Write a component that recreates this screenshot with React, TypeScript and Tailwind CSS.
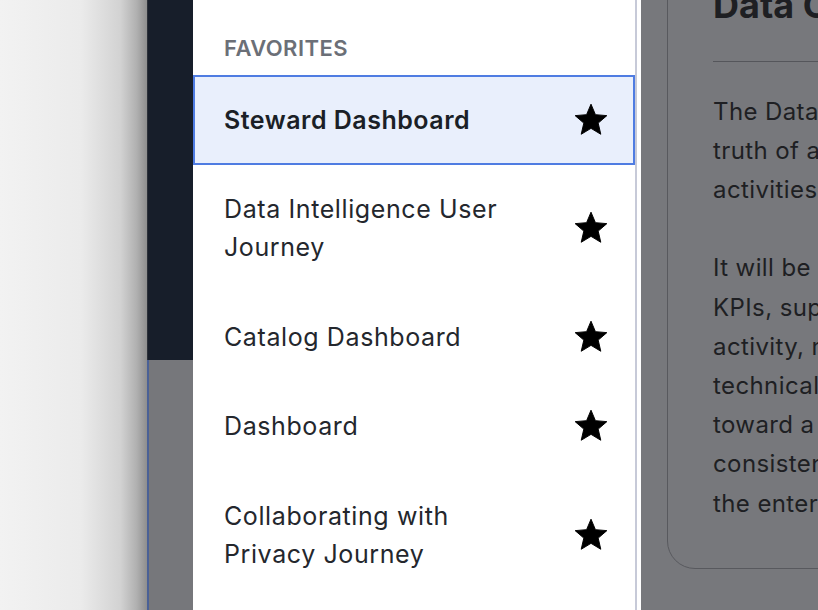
import React from "react";

const Star = () => (
  <svg width="38" height="38" viewBox="0 0 24 24" className="shrink-0">
    <path
      d="M12 17.27L18.18 21l-1.64-7.03L22 9.24l-7.19-.61L12 2 9.19 8.63 2 9.24l5.46 4.73L5.82 21z"
      fill="#000"
      stroke="#000"
      strokeWidth="0.6"
      strokeLinejoin="round"
    />
  </svg>
);

type Item = { label: string; selected?: boolean };

const items: Item[] = [
  { label: "Steward Dashboard", selected: true },
  { label: "Data Intelligence User Journey" },
  { label: "Catalog Dashboard" },
  { label: "Dashboard" },
  { label: "Collaborating with Privacy Journey" },
];

const lines1 = [
  "The Data Governance Dashboard is the single source of",
  "truth of all data governance and stewardship",
  "activities across the organization.",
];
const lines2 = [
  "It will be used to track governance health,",
  "KPIs, support stewardship workflows and",
  "activity, monitor quality, and guide both",
  "technical and business teams",
  "toward a shared understanding and",
  "consistent practices across",
  "the enterprise.",
];

export default function App() {
  return (
    <div
      className="flex h-[610px] w-[818px] overflow-hidden bg-white"
      style={{ fontFamily: "Inter, 'Noto Sans', sans-serif" }}
    >
      {/* left shadowed area */}
      <div className="h-full w-[147px] shrink-0 bg-[linear-gradient(to_right,#f2f2f2_0%,#ebebeb_55%,#d2d2d2_82%,#b0b0b0_93%,#8e8e8e_100%)]" />

      {/* dark strip */}
      <div className="flex h-full w-[46px] shrink-0 flex-col">
        <div className="h-[360px] border-l border-[#2c3139] bg-[#171e2a]" />
        <div className="flex-1 border-l-2 border-[#4a6196] bg-[#76777b]" />
      </div>

      {/* favorites panel */}
      <div className="flex h-full w-[448px] shrink-0 bg-white">
        <div className="h-full w-[442px] shrink-0">
          <div className="h-[75px] pl-[31px] pt-[32px] text-[22px] font-semibold leading-[32px] tracking-[0.02em] text-[#6b6f77]">
            FAVORITES
          </div>
          <div className="flex flex-col">
            {items.map((it) => (
              <div
                key={it.label}
                className={
                  it.selected
                    ? "flex items-center justify-between border-2 border-[#4f7ce2] bg-[#e9effc] py-[23.75px] pl-[29px] pr-[23px]"
                    : "flex items-center justify-between border-2 border-transparent py-[23.75px] pl-[29px] pr-[23px]"
                }
              >
                <div
                  className={
                    it.selected
                      ? "w-[300px] text-[25px] font-semibold leading-[38px] tracking-[0.5px] text-[#1b1f27]"
                      : "w-[300px] text-[25px] font-normal leading-[38px] tracking-[0.6px] text-[#24272d]"
                  }
                >
                  {it.label}
                </div>
                <Star />
              </div>
            ))}
          </div>
        </div>
        <div className="h-full w-[2px] shrink-0 bg-[#c7cad8]" />
      </div>

      {/* overlay area with card */}
      <div className="h-full flex-1 bg-[#77787c] pl-[26px]">
        <div className="-mt-[60px] h-[629px] w-[400px] rounded-bl-[28px] border border-[#58595e] pl-[45px] pt-[42px] text-[#1e1f23]">
          <div className="whitespace-nowrap text-[36px] font-bold leading-[44px]">
            Data Catalog Overview
          </div>
          <div className="mt-[34px] h-px bg-[#55565b]" />
          <div className="mt-[29.5px] text-[24px] leading-[39.2px] tracking-[0.4px]">
            {lines1.map((l) => (
              <div key={l} className="whitespace-nowrap">
                {l}
              </div>
            ))}
            <div className="h-[39.2px]" />
            {lines2.map((l) => (
              <div key={l} className="whitespace-nowrap">
                {l}
              </div>
            ))}
          </div>
        </div>
      </div>
    </div>
  );
}
